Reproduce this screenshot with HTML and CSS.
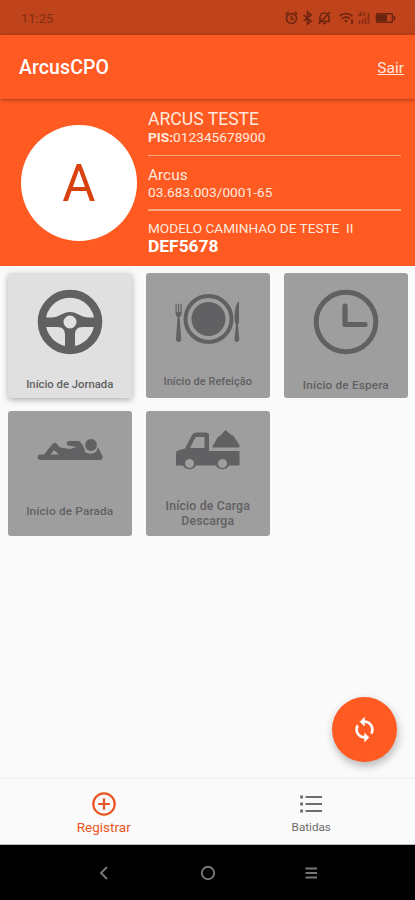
FILE: index.html
```html
<!DOCTYPE html>
<html lang="pt-BR">
<head>
<meta charset="utf-8">
<meta name="viewport" content="width=device-width, initial-scale=1">
<title>ArcusCPO</title>
<link rel="stylesheet" href="styles.css">
</head>
<body>
<div class="app">
  <div class="status">
    <span class="time">11:25</span>
    <svg class="status-icons" width="114" height="16" viewBox="0 0 114 16" fill="none" stroke="currentColor" stroke-width="1.6">
      <circle cx="6.500" cy="8.500" r="5"/><path d="M6.500 5.500V9H9M.5 4.500L3.500 2M12.500 4.500L9.500 2"/>
      <path d="M18.500 5L26 11L22.500 14V2L26 5L18.500 11"/>
      <path d="M35 11.500V7.500A4.500 4.500 0 0 1 44 7.500V11.500ZM38 13.500H41M33.500 14L45 2"/>
      <path d="M54.500 6Q61 1 67.500 6M57 8.700Q61 5.500 65 8.700"/><path d="M59 10.500Q61 9.500 63 10.500L61 12.500Z" fill="currentColor" stroke="none"/><path d="M67 9V14"/>
      <g opacity=".65"><path d="M76.500 2L74 5H78M79.500 2V6M74.500 10V14M77.500 9V14M80.500 7V14M83.500 3V14"/></g>
      <rect x="91.500" y="3.700" width="16" height="8.600" rx="1.500"/><rect x="92" y="4.500" width="10" height="7" fill="currentColor" stroke="none"/><path d="M109.500 6V10"/>
    </svg>
  </div>
  <header class="bar">
    <h1 class="title">ArcusCPO</h1>
    <a class="exit">Sair</a>
  </header>
  <section class="profile">
    <div class="avatar">A</div>
    <div class="info">
      <div class="name">ARCUS TESTE</div>
      <div class="pis"><b>PIS:</b>012345678900</div>
      <hr class="rule">
      <div class="company">Arcus</div>
      <div class="cnpj">03.683.003/0001-65</div>
      <hr class="rule second">
      <div class="model">MODELO CAMINHAO DE TESTE &nbsp;II</div>
      <div class="plate">DEF5678</div>
    </div>
  </section>
  <main class="content">
    <div class="grid">
      <div class="card active">
        <svg class="icon" width="66" height="66" viewBox="0 0 66 66">
          <circle cx="33" cy="33" r="28.300" fill="none" stroke="currentColor" stroke-width="8"/>
          <path fill="currentColor" fill-rule="evenodd" d="M6 28.500H14C22 28.500 26 23 33 23S44 28.500 52 28.500H60V38H46C40 38 38 41 38 46V60H28V46C28 41 26 38 20 38H6ZM33 26.500A6.500 6.500 0 1 0 33 39.500A6.500 6.500 0 1 0 33 26.500Z"/>
        </svg>
        <span class="label">Início de Jornada</span>
      </div>
      <div class="card meal">
        <svg class="icon" width="66" height="50" viewBox="0 0 66 50" fill="currentColor">
          <circle cx="33.500" cy="25" r="23" fill="none" stroke="currentColor" stroke-width="4"/>
          <circle cx="33.500" cy="25" r="17"/>
          <path d="M.5 10H1.700V18H3V9.500H4.200V18H5.500V10H6.700V19Q6.700 22 4.600 23L6.200 45Q6.200 48 3.600 48T1 45L2.600 23Q.5 22 .5 19Z"/>
          <path d="M64 7V28L63 31L64.200 45Q64.200 48 61.800 48T59.500 45L61 31Q59.800 29 59.500 24Q59.500 11 64 7Z"/>
        </svg>
        <span class="label">Início de Refeição</span>
      </div>
      <div class="card wait">
        <svg class="icon" width="66" height="66" viewBox="0 0 66 66" fill="none" stroke="currentColor">
          <circle cx="33" cy="33" r="29.800" stroke-width="5"/>
          <path d="M32 17V35.500H52" stroke-width="5.200" stroke-linecap="round" stroke-linejoin="round"/>
        </svg>
        <span class="label">Início de Espera</span>
      </div>
      <div class="card rest">
        <svg class="icon" width="66" height="22" viewBox="0 0 66 22" fill="currentColor">
          <path fill-rule="evenodd" d="M3 15.500H7L15 5.500Q17.500 2.500 20 5L23 8.500L33 10L40 8L31 6.500Q29 5 30 3Q31 2 33 2H42Q47 6 48 13Q53 16.500 59 13L61 8.500L65.500 17Q66 21 63 21H3Q.5 20.500.5 18.200T3 15.500ZM17 11L13.500 15.500H22Z"/>
          <circle cx="54" cy="6" r="5.900"/>
        </svg>
        <span class="label">Início de Parada</span>
      </div>
      <div class="card load">
        <svg class="icon" width="66" height="44" viewBox="0 0 66 44" fill="currentColor">
          <path fill-rule="evenodd" d="M1 24Q1 22 3 21.500L10 19.500L17 6Q18.500 3.500 21 3.500H31Q34 3.500 34 6V22H64.500V36.500H54A7.500 7.500 0 0 1 41 36.500H21A7.500 7.500 0 0 1 8 36.500H1ZM15 19H29.500V8H22Q20.500 8 20 9ZM14.500 30A4.500 4.500 0 1 0 14.500 39A4.500 4.500 0 1 0 14.500 30ZM47.500 30A4.500 4.500 0 1 0 47.500 39A4.500 4.500 0 1 0 47.500 30Z"/>
          <path d="M37 18.500L42.500 8.500L46 6L50.500 1L55 5L58.500 7L64.500 16V18.500Z"/>
        </svg>
        <span class="label">Início de Carga<br>Descarga</span>
      </div>
    </div>
    <button class="fab" aria-label="Sincronizar">
      <svg width="27" height="27" viewBox="0 0 24 24" fill="#fff" stroke="#fff" stroke-width=".4"><path d="M12 4V1L8 5l4 4V6c3.310 0 6 2.690 6 6 0 1.010-.25 1.970-.7 2.800l1.460 1.460C19.540 15.030 20 13.570 20 12c0-4.420-3.580-8-8-8zm0 14c-3.310 0-6-2.690-6-6 0-1.010.25-1.970.7-2.800L5.240 7.740C4.460 8.970 4 10.430 4 12c0 4.420 3.580 8 8 8v3l4-4-4-4v3z"/></svg>
    </button>
  </main>
  <nav class="tabs">
    <div class="tab selected">
      <svg width="26" height="26" viewBox="0 0 26 26" fill="none" stroke="currentColor" stroke-width="2.200"><circle cx="13" cy="13" r="10.700"/><path d="M13 7.200V18.800M7.200 13H18.800"/></svg>
      <span>Registrar</span>
    </div>
    <div class="tab">
      <svg width="26" height="26" viewBox="0 0 26 26" fill="none" stroke="currentColor" stroke-width="2.200"><path d="M7.500 6H24M7.500 13H24M7.500 20H24"/><path d="M2.200 6H5M2.200 13H5M2.200 20H5" stroke-width="2.800"/></svg>
      <span>Batidas</span>
    </div>
  </nav>
  <div class="system">
    <svg width="18" height="18" viewBox="0 0 18 18"><path d="M12 3L6 9L12 15"/></svg>
    <svg width="18" height="18" viewBox="0 0 18 18"><circle cx="9" cy="9" r="6.200"/></svg>
    <svg width="18" height="18" viewBox="0 0 18 18"><path d="M3.500 4.500H15M3.500 9H15M3.500 13.500H15"/></svg>
  </div>
</div>
</body>
</html>
```
FILE: styles.css
```css
* { box-sizing: border-box; }
body { margin: 0; font-family: Roboto, "Liberation Sans", sans-serif; background: #fafafa; }
.app { width: 415px; height: 900px; display: flex; flex-direction: column; overflow: hidden; }
.status { height: 35px; flex: none; background: #bf431b; color: #6b2410; display: flex; justify-content: space-between; align-items: center; padding: 1px 16px 0 21px; }
.time { font-size: 13px; color: #822e14; }
.bar { height: 64px; flex: none; background: #ff5a22; color: #fff; display: flex; justify-content: space-between; align-items: center; padding: 1px 11px 0 19px; box-shadow: 0 1px 4px rgba(0,0,0,.35); z-index: 1; }
.title { margin: 0; font-size: 19.500px; font-weight: 500; letter-spacing: .1px; }
.exit { font-size: 15.500px; text-decoration: underline; color: #ffe6dc; }
.profile { height: 167px; flex: none; background: #ff5a22; color: #ffe9df; display: flex; padding: 10px 14px 0 21px; }
.avatar { width: 116px; height: 116px; margin: 15.500px 11px 0 0; flex: none; border-radius: 50%; background: #fff; color: #d8420e; display: flex; align-items: center; justify-content: center; font-size: 51px; padding-top: 2px; }
.info { flex: 1; white-space: nowrap; }
.name { font-size: 17.600px; line-height: 20px; }
.pis { font-size: 13.700px; line-height: 17px; }
.rule { margin: 8.500px 0 10px; border: 0; height: 1.500px; background: #ffa884; }
.rule.second { margin: 9px 0 9.500px; }
.company { font-size: 15.400px; line-height: 18px; }
.cnpj { font-size: 13.700px; line-height: 16px; }
.model { font-size: 13.600px; line-height: 17px; }
.plate { font-size: 17.400px; line-height: 18px; font-weight: 700; color: #fff; }
.content { flex: 1; position: relative; padding: 7px 7px 0 7.500px; }
.grid { display: grid; grid-template-columns: repeat(3, 124.500px); grid-auto-rows: 125px; gap: 13.400px 13.500px; }
.card { border-radius: 3px; background: #9e9e9e; color: #616062; display: flex; flex-direction: column; align-items: center; justify-content: space-between; padding: 16px 0 6px; }
.card.active { background: #e0e0e0; box-shadow: 0 2px 6px rgba(0,0,0,.3); }
.icon { display: block; flex: none; }
.label { font-size: 11.300px; line-height: 14px; font-weight: 500; text-align: center; }
.wait .label, .rest .label { font-size: 11.800px; letter-spacing: .15px; }
.meal { padding: 21px 0 9px; }
.meal .label { font-size: 11px; letter-spacing: .05px; }
.rest { padding: 28px 0 18px; }
.load { padding: 18px 0 8px; }
.load .label { font-size: 12.300px; line-height: 14.500px; letter-spacing: .15px; }
.fab { position: absolute; right: 18px; bottom: 17px; width: 65px; height: 65px; border: 0; border-radius: 50%; padding: 0; background: #ff5a22; display: flex; align-items: center; justify-content: center; box-shadow: 1px 4px 8px rgba(0,0,0,.28); }
.tabs { height: 66px; flex: none; background: #fafafa; display: flex; box-shadow: 0 0 3px rgba(0,0,0,.1); border-bottom: 1px solid #bbb; }
.tab { flex: 1; display: flex; flex-direction: column; align-items: center; padding-top: 12px; color: #6d6d6d; font-size: 11.700px; line-height: 16px; }
.tab span { margin-top: 2px; }
.tab.selected { color: #e95624; font-size: 13.500px; }
.system { height: 55px; flex: none; background: #000; display: flex; justify-content: space-between; align-items: center; padding: 0 95px; }
.system svg { fill: none; stroke: #777; stroke-width: 1.900; }
```
